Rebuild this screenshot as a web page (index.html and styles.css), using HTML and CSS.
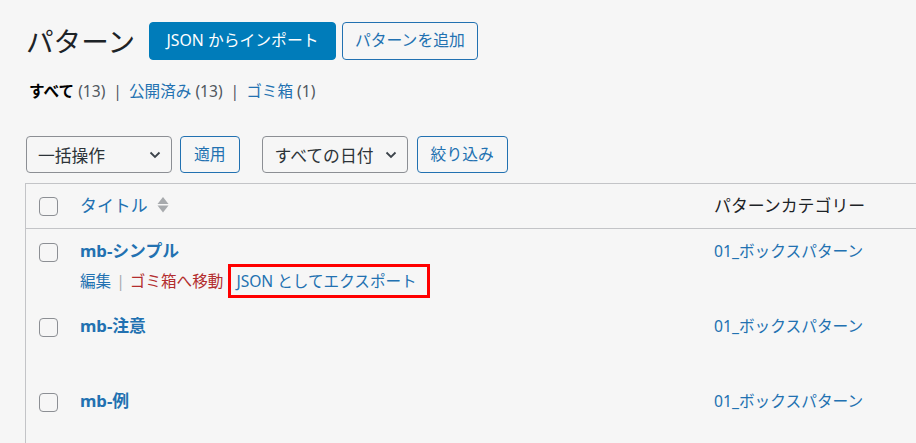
FILE: index.html
```html
<!DOCTYPE html>
<html lang="ja">
<head>
<meta charset="utf-8">
<title>パターン</title>
<link rel="stylesheet" href="styles.css">
</head>
<body>
<div class="wrap">
  <div class="head">
    <h1 class="title">パターン</h1>
    <a class="btn btn-primary" href="#">JSON からインポート</a>
    <a class="btn btn-outline btn-add" href="#">パターンを追加</a>
  </div>

  <ul class="subsub">
    <li><span class="current">すべて</span> <span class="count">(13)</span></li>
    <li class="sep">|</li>
    <li><a href="#">公開済み</a> <span class="count">(13)</span></li>
    <li class="sep">|</li>
    <li><a href="#">ゴミ箱</a> <span class="count">(1)</span></li>
  </ul>

  <div class="tablenav">
    <div class="select select-bulk">
      <span>一括操作</span>
      <svg class="chev" width="12" height="8" viewBox="0 0 12 8"><polyline points="1.5,1.5 6,6 10.5,1.5" fill="none" stroke="#3c434a" stroke-width="1.8"/></svg>
    </div>
    <a class="btn btn-outline btn-small" href="#">適用</a>
    <div class="select select-date">
      <span>すべての日付</span>
      <svg class="chev" width="12" height="8" viewBox="0 0 12 8"><polyline points="1.5,1.5 6,6 10.5,1.5" fill="none" stroke="#3c434a" stroke-width="1.8"/></svg>
    </div>
    <a class="btn btn-outline btn-small" href="#">絞り込み</a>
  </div>

  <div class="table">
    <div class="row row-head">
      <div class="cell cell-check"><span class="checkbox"></span></div>
      <div class="cell cell-title">
        <a class="th-link" href="#">タイトル</a>
        <svg class="sort" width="12" height="16" viewBox="0 0 12 16"><polygon points="6,0 11.5,7 0.5,7" fill="#a7aaad"/><polygon points="0.5,8.5 11.5,8.5 6,15.5" fill="#a7aaad"/></svg>
      </div>
      <div class="cell cell-cat th-text">パターンカテゴリー</div>
    </div>

    <div class="row">
      <div class="cell cell-check"><span class="checkbox"></span></div>
      <div class="cell cell-title">
        <a class="row-title" href="#">mb-シンプル</a>
        <div class="actions">
          <a href="#">編集</a><span class="bar">|</span><a class="trash" href="#">ゴミ箱へ移動</a><a class="export" href="#">JSON としてエクスポート</a>
        </div>
      </div>
      <div class="cell cell-cat"><a href="#">01_ボックスパターン</a></div>
    </div>

    <div class="row">
      <div class="cell cell-check"><span class="checkbox"></span></div>
      <div class="cell cell-title"><a class="row-title" href="#">mb-注意</a></div>
      <div class="cell cell-cat"><a href="#">01_ボックスパターン</a></div>
    </div>

    <div class="row">
      <div class="cell cell-check"><span class="checkbox"></span></div>
      <div class="cell cell-title"><a class="row-title" href="#">mb-例</a></div>
      <div class="cell cell-cat"><a href="#">01_ボックスパターン</a></div>
    </div>
  </div>
</div>
</body>
</html>
```

FILE: styles.css
```css
* { box-sizing: border-box; }

html, body {
  margin: 0;
  padding: 0;
  background: #f6f6f6;
  overflow: hidden;
}

body {
  font-family: "Noto Sans", "Noto Sans CJK JP", sans-serif;
  color: #3c434a;
  font-size: 15.6px;
}

a { color: #2271b1; text-decoration: none; }

.wrap {
  padding-left: 26px;
  width: 1000px;
}

.head {
  display: flex;
  align-items: center;
  margin-top: 22px;
  height: 38px;
}

.title {
  margin: 0 14px 0 0;
  font-size: 27.6px;
  font-weight: 400;
  line-height: 38px;
  color: #1d2327;
}

.btn {
  display: inline-flex;
  align-items: center;
  justify-content: center;
  height: 38px;
  padding: 0 15px;
  font-size: 15.8px;
  line-height: 1;
  border-radius: 4px;
  border: 1px solid #2271b1;
  white-space: nowrap;
}

.btn-primary {
  background: #007cba;
  border-color: #007cba;
  color: #fff;
  margin-right: 6px;
  padding: 0 16.5px;
}

.btn-outline {
  background: #f6f6f6;
  color: #2271b1;
}

.btn-add {
  padding: 0 12px;
}

.btn-small {
  height: 37px;
  padding: 0 13px;
}

.subsub {
  list-style: none;
  margin: 19px 0 0 3px;
  padding: 0;
  display: flex;
  align-items: center;
  line-height: 24px;
  font-size: 15.6px;
  height: 24px;
}

.subsub li { white-space: nowrap; }

.current { font-weight: 700; color: #000; }
.count { color: #50575e; }
.sep { margin: 0 7px 0 8px; color: #50575e; }

.tablenav {
  display: flex;
  align-items: center;
  margin-top: 33px;
  height: 37px;
}

.select {
  display: flex;
  align-items: center;
  justify-content: space-between;
  width: 146px;
  height: 37px;
  padding: 0 10px 0 11px;
  border: 1px solid #8c8f94;
  border-radius: 4px;
  font-size: 16.8px;
  color: #2c3338;
  background: #f6f6f6;
}

.select-bulk { margin-right: 8px; }
.select-date { margin-left: 22px; margin-right: 9px; padding-left: 12px; }

.chev { display: block; }

.table {
  margin-top: 10px;
  margin-left: -1px;
  border-top: 1px solid #c3c4c7;
  border-left: 1px solid #c3c4c7;
}

.row {
  display: grid;
  grid-template-columns: 54px 634px 300px;
  min-height: 75px;
}

.row-head {
  min-height: 44px;
  height: 45px;
  border-bottom: 1px solid #c3c4c7;
  align-items: center;
}

.cell-check {
  padding-left: 13px;
}

.checkbox {
  display: block;
  width: 19px;
  height: 19px;
  border: 1.3px solid #8c8f94;
  border-radius: 4px;
  background: #f6f6f6;
}

.row:not(.row-head) .cell-check { padding-top: 14px; }
.row:not(.row-head) .cell-title,
.row:not(.row-head) .cell-cat { padding-top: 11px; }

.row-head .cell-check { padding-top: 1px; }

.row-head .cell-title {
  display: flex;
  align-items: center;
  gap: 9px;
}

.th-link, .th-text {
  font-size: 16.9px;
  line-height: 22px;
}

.th-text { color: #1d2327; }

.sort { display: block; margin-top: -2px; }

.row-title {
  display: block;
  font-size: 16.8px;
  font-weight: 700;
  line-height: 22px;
}

.cell-cat a {
  font-size: 15.7px;
  line-height: 22px;
}

.actions {
  display: flex;
  align-items: center;
  margin-top: 2px;
  font-size: 15.6px;
  line-height: 22px;
  white-space: nowrap;
}

.bar { color: #a7aaad; margin: 0 5px 0 5px; }
.trash { color: #b32d2e; }

.export {
  margin-left: 5px;
  border: 3px solid #ff0000;
  padding: 3px 10px 3px 5px;
  line-height: 22px;
}
```
